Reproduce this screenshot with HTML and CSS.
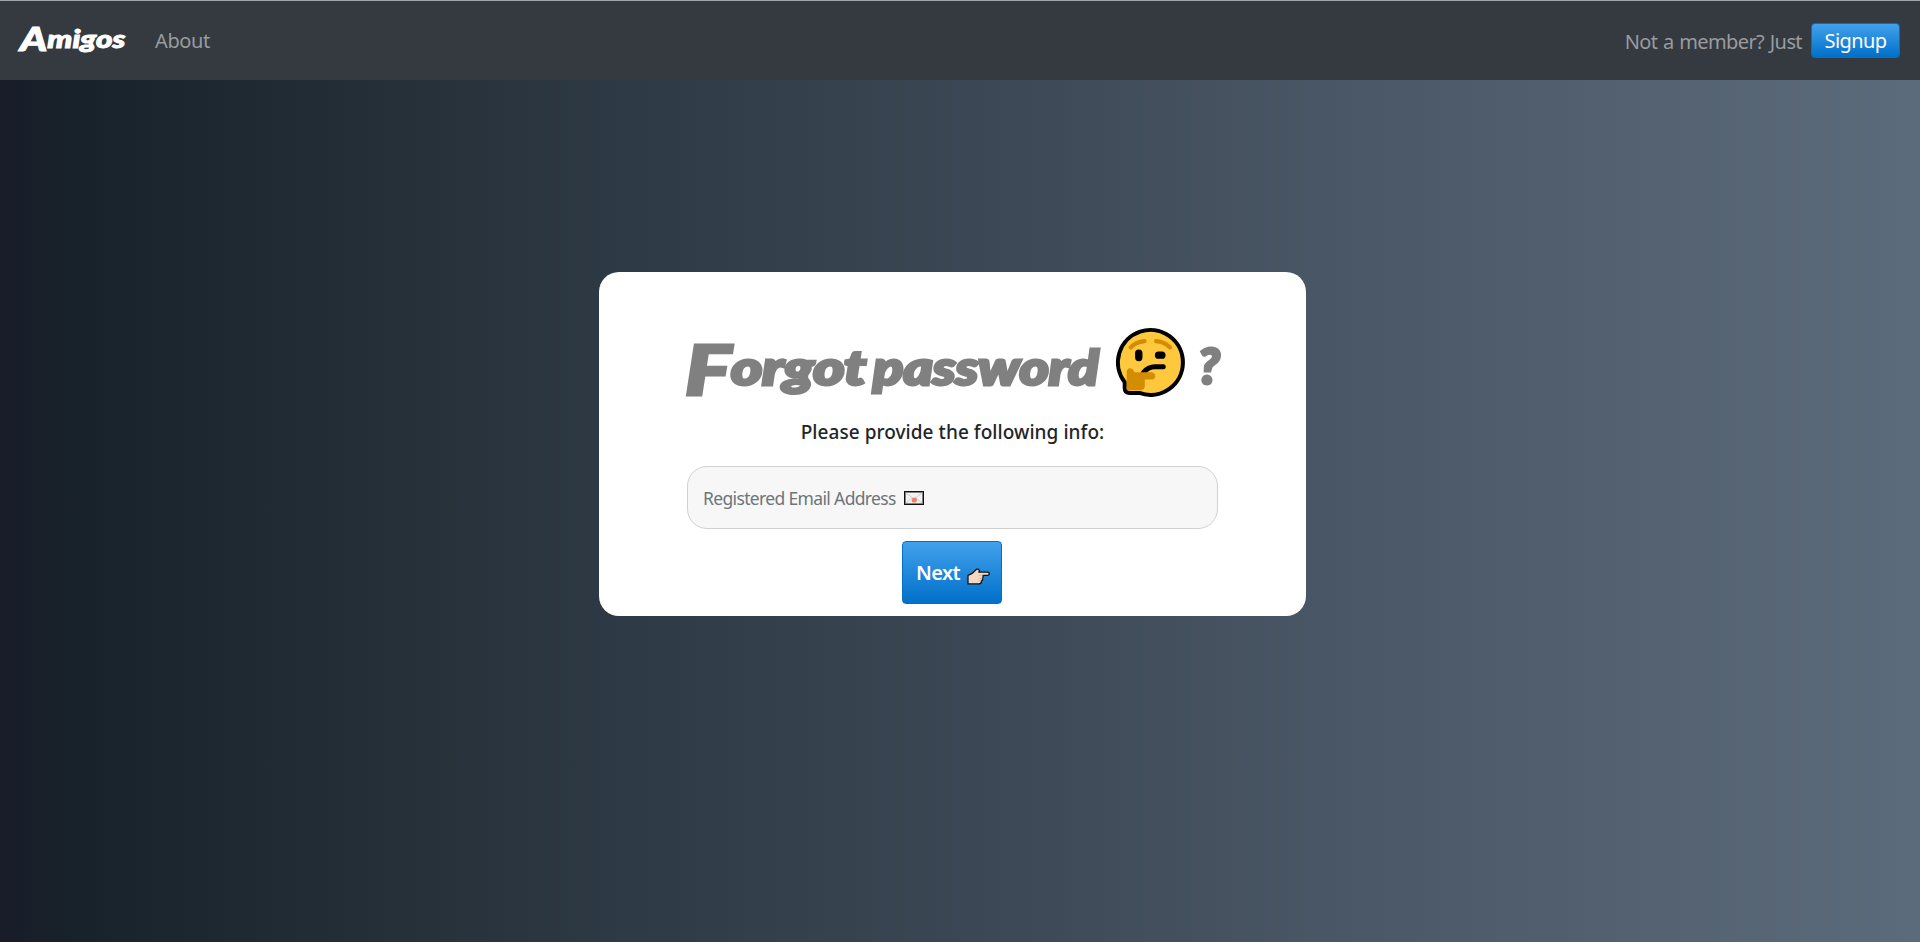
FILE: index.html
```html
<!DOCTYPE html>
<html lang="en">
<head>
<meta charset="utf-8">
<title>Amigos</title>
<link rel="stylesheet" href="styles.css">
</head>
<body>
<nav class="navbar">
  <a class="brand"><span class="brand-text">Amigos</span></a>
  <a class="nav-link">About</a>
  <span class="member">Not a member? Just</span>
  <button class="btn signup"><span>Signup</span></button>
</nav>
<main class="page">
  <form class="card">
    <h1 class="title">
      <span class="title-first">Forgot</span>
      <span class="title-second">password</span>
      <svg class="thinking" viewBox="48 54 206 206" aria-hidden="true">
        <path d="M74 216A97 97 0 1 1 118 248H89Q74 248 74 234Z" fill="#ffc83d" stroke="#000" stroke-width="12" stroke-linejoin="round"/>
        <g fill="none" stroke-linecap="round" stroke="#d48c00" stroke-width="13">
          <path d="M92 112Q106 96 133 93M168 93Q194 95 209 112"/>
        </g>
        <g fill="none" stroke-linecap="round" stroke="#000">
          <path d="M116 129V142M175 135H185" stroke-width="22"/>
          <path d="M130 187Q144 170 164 170H189" stroke-width="15"/>
        </g>
        <path d="M80 238V184Q81 175 90 174Q101 175 102 186H154Q165 187 165 198Q164 208 154 208H134V227Q133 240 120 240H84Z" fill="#d48c00"/>
      </svg>
      <span class="title-mark">?</span>
    </h1>
    <p class="hint">Please provide the following info:</p>
    <div class="field">
      <span class="placeholder">Registered Email Address</span>
      <svg class="envelope" viewBox="0 0 20 14" aria-hidden="true">
        <path d="M.75.75H19.25V13.25H.75Z" fill="#f2f2f2" stroke="#111" stroke-width="1.5"/>
        <path d="M1.500 1.500L10 8L18.500 1.500M1.500 12.500L8 7M18.500 12.500L12 7" fill="none" stroke="#c4c4c4" stroke-width=".8"/>
        <circle cx="10.3" cy="9" r="2.6" fill="#f0806c"/>
      </svg>
    </div>
    <button class="btn next" type="button">
      <span>Next</span>
      <svg class="hand" viewBox="230 112 70 51" aria-hidden="true">
        <path d="M233 134L246 128L258 116Q266 113 268 120L266 124H293Q298 125 298 130Q297 134 292 134H278Q281 140 277 143Q279 149 274 151Q275 159 267 160H233Z" fill="#f7d7c4" stroke="#111" stroke-width="4" stroke-linejoin="round"/>
        <path d="M265 134H279M265 143H277M265 151H274" stroke="#d9ae96" stroke-width="2"/>
      </svg>
    </button>
  </form>
</main>
</body>
</html>
```
FILE: styles.css
```css
* { box-sizing: border-box; }
body {
  margin: 0;
  height: 942px;
  display: flex;
  flex-direction: column;
  overflow: hidden;
  font-family: "Noto Sans", "Open Sans", sans-serif;
  background: linear-gradient(to right, #181d29 0, #18222a 4%, #212b33 15%, #2e3a45 33%, #3c4855 52%, #4a5766 70%, #5c6b7b 100%);
}
.navbar {
  height: 80px;
  flex: none;
  display: flex;
  align-items: center;
  padding: 0 20px;
  border-top: 1px solid #a5a8ab;
  background: #343a40;
  font-size: 20px;
  color: #999c9f;
  white-space: nowrap;
}
.brand {
  width: 135px;
  font: italic 900 25px/40px Lato, sans-serif;
  color: #fff;
  -webkit-text-stroke: 1px #fff;
}
.brand-text {
  display: block;
  width: max-content;
  transform: translateY(-3px) scaleX(1.26);
  transform-origin: left;
}
.brand-text::first-letter { font-size: 33px; line-height: 0; vertical-align: -3px; }
.nav-link { letter-spacing: -.4px; }
.member { margin-left: auto; margin-right: 9px; letter-spacing: -.6px; word-spacing: 1px; padding-top: 2px; }
.btn {
  border: 1px solid #0070c9;
  border-radius: 4px;
  background: linear-gradient(#42a1ec, #0070c9);
  color: #fff;
  font-family: inherit;
  font-size: 20px;
  padding: 0;
}
.signup { width: 89px; height: 35px; line-height: 30px; letter-spacing: -.6px; }
.page { flex: 1; padding: 192px 0 0 599px; }
.card {
  width: 707px;
  height: 344px;
  border-radius: 20px;
  background: #fff;
  display: flex;
  flex-direction: column;
  align-items: center;
}
.title {
  margin: 54px 0 0;
  width: 543px;
  height: 74px;
  padding-left: 6px;
  display: flex;
  align-items: flex-start;
  white-space: nowrap;
  font: italic 900 47px/82px Lato, sans-serif;
  color: gray;
  -webkit-text-stroke: 3px gray;
}
.title-first { width: 186px; transform: translateX(-2px) scaleX(1.27); transform-origin: left; }
.title-first::first-letter { font-size: 68px; line-height: 0; vertical-align: -10px; }
.title-second { width: 243px; transform: scaleX(1.19); transform-origin: left; }
.thinking { width: 69px; height: 69px; margin-top: 2px; overflow: visible; }
.title-mark { margin-left: 13px; font-size: 50px; line-height: 78px; }
.hint {
  margin: 18px 0 0;
  font-size: 19px;
  line-height: 28px;
  font-weight: 500;
  letter-spacing: .06px;
  color: #212529;
}
.field {
  width: 531px;
  height: 63px;
  margin-top: 20px;
  padding: 0 15px;
  border: 1px solid #d0d1d2;
  border-radius: 20px;
  background: #f7f7f7;
  display: flex;
  align-items: center;
  color: #6c757d;
  font-size: 17.5px;
  font-weight: 400;
}
.placeholder { width: 201px; white-space: nowrap; letter-spacing: -.65px; }
.envelope { width: 20px; height: 14px; }
.next {
  width: 100px;
  height: 63px;
  margin: 12px 1px 0 0;
  padding: 0 11px 0 13px;
  display: flex;
  align-items: center;
  justify-content: space-between;
  font-weight: 600;
  letter-spacing: -.6px;
}
.hand { width: 23px; height: 17px; margin-top: 7px; }
```
